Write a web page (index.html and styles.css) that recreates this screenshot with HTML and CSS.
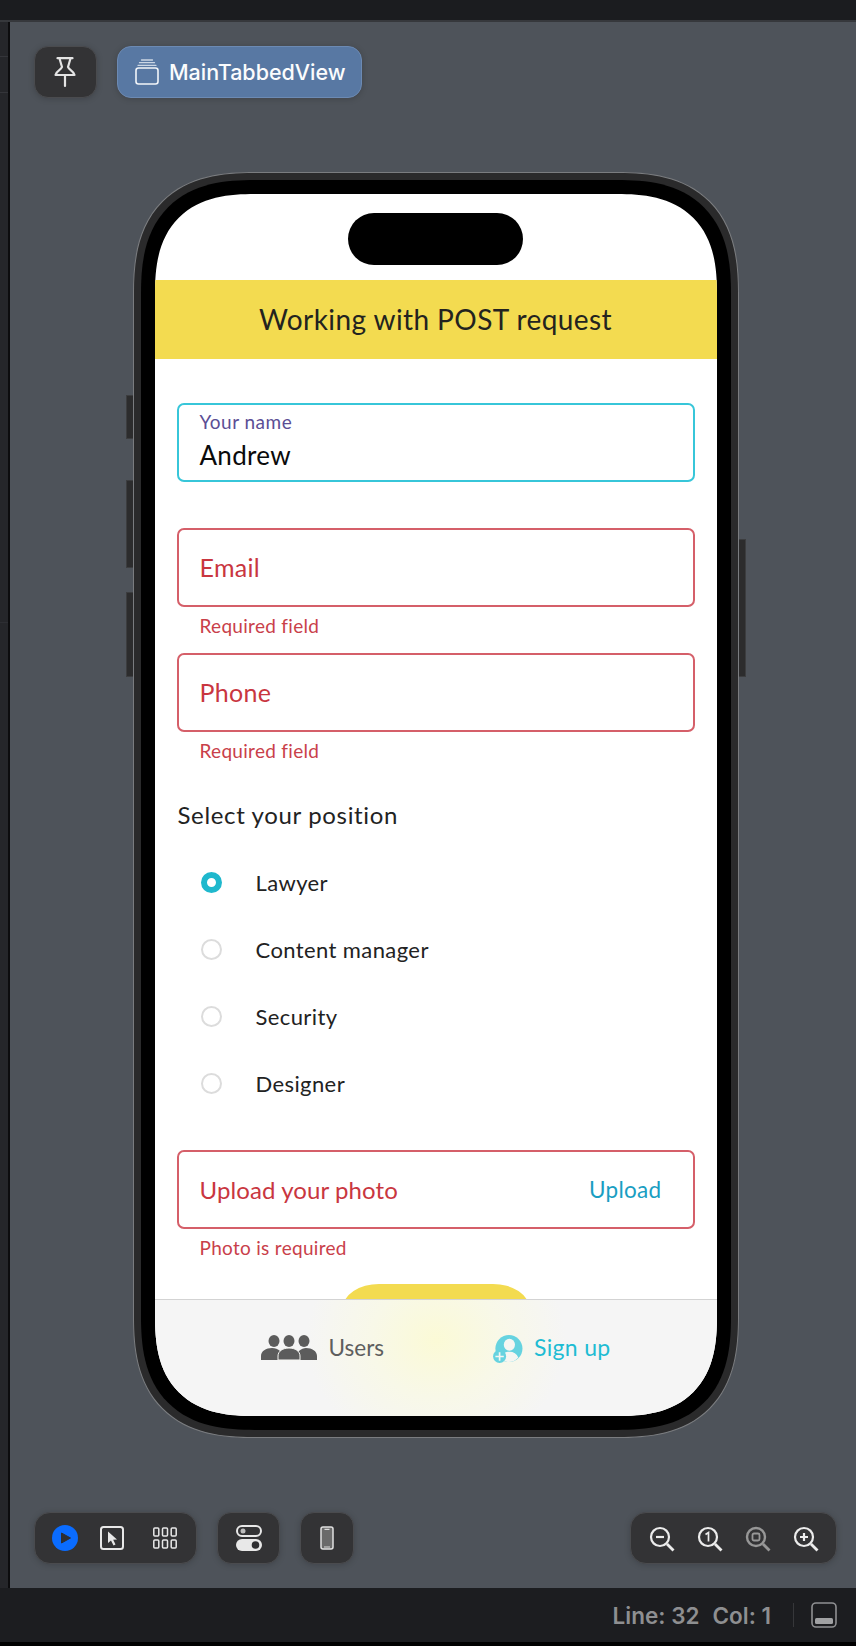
FILE: index.html
```html
<!DOCTYPE html>
<html lang="en">
<head>
<meta charset="utf-8">
<title>MainTabbedView</title>
<link rel="stylesheet" href="styles.css">
</head>
<body>
<div class="app">
  <div class="topbar"></div>
  <div class="workspace">
    <aside class="strip">
      <div class="strip-row one"></div>
      <div class="strip-row two"></div>
      <div class="strip-row three"></div>
    </aside>
    <main class="canvas">
      <div class="toolbar">
        <button class="tool pin">
          <svg width="22" height="32" viewBox="0 0 22 32" fill="none" stroke="#e4e4e4" stroke-width="2.200" stroke-linecap="round" stroke-linejoin="round"><path d="M3.500 2.200h15M5.500 2.500 8 11c-1 3-5.500 3.500-6.500 8h19c-1-4.500-5.500-5-6.500-8l2.500-8.500M11 19v11"/></svg>
        </button>
        <button class="tool preview-name">
          <svg width="24" height="26" viewBox="0 0 24 26" fill="none" stroke="#f2f5f9" stroke-width="1.600" stroke-linecap="round"><path d="M6.500 1h11M4.500 3.700h15M3 6.300h18" stroke-width="1.300" opacity=".75"/><rect x="1" y="9" width="22" height="16" rx="2.500"/></svg>
          <span>MainTabbedView</span>
        </button>
      </div>

      <div class="phone">
        <span class="side-btn mute"></span>
        <span class="side-btn vol-up"></span>
        <span class="side-btn vol-down"></span>
        <span class="side-btn power"></span>
        <div class="bezel">
          <div class="screen">
            <div class="island"></div>
            <div class="safe"></div>
            <header class="app-header">Working with POST request</header>
            <form class="form">
              <div class="field active">
                <span class="float-label">Your name</span>
                <span class="value">Andrew</span>
              </div>
              <div class="field error"><span class="placeholder">Email</span></div>
              <div class="hint">Required field</div>
              <div class="field error"><span class="placeholder">Phone</span></div>
              <div class="hint">Required field</div>
              <div class="section-title">Select your position</div>
              <div class="radios">
                <div class="radio-row"><span class="radio on"></span><span>Lawyer</span></div>
                <div class="radio-row"><span class="radio"></span><span>Content manager</span></div>
                <div class="radio-row"><span class="radio"></span><span>Security</span></div>
                <div class="radio-row"><span class="radio"></span><span>Designer</span></div>
              </div>
              <div class="field error upload"><span class="placeholder photo">Upload your photo</span><span class="upload-link">Upload</span></div>
              <div class="hint">Photo is required</div>
              <div class="submit"></div>
            </form>
            <nav class="tabbar">
              <div class="tab users">
                <svg width="56" height="26" viewBox="0 0 56 26" fill="#5c5c5c"><ellipse cx="13" cy="6" rx="5.500" ry="6"/><ellipse cx="28" cy="6" rx="5.500" ry="6"/><ellipse cx="43" cy="6" rx="5.500" ry="6"/><path d="M0 25v-4c0-5 5-8 11-8 3 0 6 1 8 3l-1 9zM38 16c2-2 5-3 7-3 6 0 11 3 11 8v4H38z"/><path d="M17 25v-4c0-5 5-8 11-8s11 3 11 8v4z" stroke="#f5f5f2" stroke-width="1"/></svg>
                <span>Users</span>
              </div>
              <div class="tab signup">
                <svg width="32" height="28" viewBox="0 0 32 30"><circle cx="17" cy="14.500" r="14.500" fill="#66d3e0"/><ellipse cx="17.500" cy="10.500" rx="6" ry="6.500" fill="#f5f6f2"/><path d="M9 25c1-5 4-7 8.500-7s8 2 9.500 6c-3 3-6 5-10 5s-5-1-8-4z" fill="#f5f6f2"/><circle cx="7" cy="23" r="7" fill="#66d3e0"/><path d="M7 18.500v9M2.500 23h9" stroke="#f5f6f2" stroke-width="1.800"/></svg>
                <span>Sign up</span>
              </div>
            </nav>
          </div>
        </div>
      </div>

      <div class="toolbar bottom">
        <div class="tool group modes">
          <svg width="26" height="26" viewBox="0 0 26 26"><circle cx="13" cy="13" r="13" fill="#0a6cff"/><path d="M9.500 8v10l9-5z" fill="#2e2e30" stroke="#2e2e30" stroke-width="1" stroke-linejoin="round"/></svg>
          <svg width="24" height="24" viewBox="0 0 24 24" fill="none"><rect x="1" y="1" width="22" height="22" rx="2.500" stroke="#e8e8e8" stroke-width="2"/><path d="M8 5.500v11.500l3-2.500 2.500 5 2-1-2.300-4.800 3.800-.2z" fill="#e8e8e8"/></svg>
          <svg width="24" height="22" viewBox="0 0 24 22" fill="none" stroke="#e8e8e8" stroke-width="1.500"><rect x=".8" y="1" width="5" height="8" rx="1"/><rect x="9.500" y="1" width="5" height="8" rx="1"/><rect x="18.200" y="1" width="5" height="8" rx="1"/><rect x=".8" y="13" width="5" height="8" rx="1"/><rect x="9.500" y="13" width="5" height="8" rx="1"/><rect x="18.200" y="13" width="5" height="8" rx="1"/></svg>
        </div>
        <div class="tool settings">
          <svg width="26" height="26" viewBox="0 0 26 26"><rect x="1" y="1" width="24" height="10" rx="5" fill="none" stroke="#e8e8e8" stroke-width="2"/><circle cx="7" cy="6" r="2.500" fill="#bdbdbd"/><rect y="14" width="26" height="12" rx="6" fill="#e8e8e8"/><circle cx="19.500" cy="20" r="3.800" fill="#2e2e30"/></svg>
        </div>
        <div class="tool device">
          <svg width="14" height="24" viewBox="0 0 14 24"><rect x="1" y="1" width="12" height="22" rx="2" fill="#6a6a6a" stroke="#e0e0e0" stroke-width="1.500"/><path d="M4.500 3.300h5M4 21h6" stroke="#d8d8d8" stroke-width="1.200"/></svg>
        </div>
        <div class="tool group zooms">
          <svg class="zoom-icon" width="26" height="26" viewBox="0 0 26 26" fill="none" stroke="#ececec"><circle cx="11" cy="11" r="9" stroke-width="2.200"/><path d="M18 18l6.500 6.500" stroke-width="2.800"/><path d="M7 11h8" stroke-width="2.200"/></svg>
          <svg class="zoom-icon" width="26" height="26" viewBox="0 0 26 26" fill="none" stroke="#ececec"><circle cx="11" cy="11" r="9" stroke-width="2.200"/><path d="M18 18l6.500 6.500" stroke-width="2.800"/><path d="M8.500 8.500l3-2v9" stroke-width="1.700"/></svg>
          <svg class="zoom-icon" width="26" height="26" viewBox="0 0 26 26" fill="none" stroke="#979797"><circle cx="11" cy="11" r="9" stroke-width="2.400"/><path d="M18 18l6.500 6.500" stroke-width="2.800"/><rect x="7.500" y="7.500" width="7" height="7" rx="1.500" stroke-width="1.800"/></svg>
          <svg class="zoom-icon" width="26" height="26" viewBox="0 0 26 26" fill="none" stroke="#ececec"><circle cx="11" cy="11" r="9" stroke-width="2.200"/><path d="M18 18l6.500 6.500" stroke-width="2.800"/><path d="M7 11h8M11 7v8" stroke-width="2.200"/></svg>
        </div>
      </div>
    </main>
  </div>
  <footer class="statusbar">
    <span class="pos">Line: 32</span>
    <span class="pos col">Col: 1</span>
    <span class="divider"></span>
    <svg width="26" height="26" viewBox="0 0 26 26"><rect x="1" y="1" width="24" height="24" rx="4" fill="none" stroke="#8f9092" stroke-width="1.600"/><rect x="4" y="16" width="18" height="6" rx="1.500" fill="#a0a1a3"/></svg>
  </footer>
</div>
</body>
</html>
```

FILE: styles.css
```css
* { box-sizing: border-box; }
html, body { margin: 0; padding: 0; }
body { width: 856px; height: 1646px; overflow: hidden; background: #000; font-family: "Lato", "Noto Sans", sans-serif; }
.app { display: flex; flex-direction: column; height: 1646px; }
.topbar { height: 22px; background: #1b1c1f; border-bottom: 2px solid #36383c; flex: none; }
.workspace { display: flex; height: 1566px; flex: none; }
.strip { width: 10px; flex: none; background: #25262a; border-right: 2px solid #0c0c0e; }
.strip-row { width: 8px; }
.strip-row.one { height: 35px; border-bottom: 1px solid #34353a; }
.strip-row.two { height: 36px; border-bottom: 1px solid #34353a; }
.strip-row.three { height: 530px; border-bottom: 1px solid #2d2e33; }
.canvas { flex: 1; background: #4e535a; padding: 24px 19px 25px 24px; display: flex; flex-direction: column; }

.toolbar { display: flex; gap: 20px; height: 52px; flex: none; }
.toolbar.bottom { margin-top: 74px; }
.tool { height: 52px; background: #333335; border: 1px solid #4a4b4e; border-radius: 14px; display: flex; align-items: center; justify-content: center; padding: 0; box-shadow: 0 1px 6px rgba(0,0,0,.18); font: inherit; }
.pin { width: 63px; padding-right: 2px; }
.preview-name { width: 245px; background: #5878a3; border-color: #6c8ab3; gap: 10px; justify-content: flex-start; padding-left: 17px; color: #fbfcfd; font-family: "Inter", sans-serif; font-size: 21.500px; font-weight: 500; }
.group { border-radius: 16px; }
.modes { width: 163px; justify-content: flex-start; padding-left: 17px; gap: 22px; }
.modes svg:nth-child(3) { margin-left: 7px; }
.settings { width: 63px; }
.device { width: 54px; }
.zooms { width: 207px; margin-left: auto; gap: 22px; padding-top: 1px; }

.phone { position: relative; align-self: center; margin-top: 74px; flex: none; width: 606px; height: 1266px; padding: 7px; background: #2a2a2b; border: 1px solid #7a7c7f; border-radius: 122px; corner-shape: superellipse(1.35); }
.side-btn { position: absolute; width: 7px; background: #2c2c2d; border: 1px solid #3c3d3f; border-right: 0; left: -8px; }
.mute { top: 222px; height: 44px; }
.vol-up { top: 307px; height: 88px; }
.vol-down { top: 419px; height: 85px; }
.power { left: auto; right: -8px; top: 366px; height: 138px; border-right: 1px solid #3c3d3f; border-left: 0; }
.bezel { height: 100%; padding: 14px; background: #000; border-radius: 114px; corner-shape: superellipse(1.35); }
.screen { position: relative; height: 100%; background: #fff; border-radius: 100px; corner-shape: superellipse(1.35); overflow: hidden; display: flex; flex-direction: column; }
.island { position: absolute; top: 19px; left: 193px; width: 175px; height: 52px; background: #000; border-radius: 26px; }
.safe { height: 86px; flex: none; }
.app-header { height: 79px; flex: none; background: #f3db50; color: #23231f; display: flex; align-items: center; justify-content: center; font-size: 28px; letter-spacing: .42px; padding-bottom: 2px; }
.form { padding: 44px 22px 0; flex: 1; display: flex; flex-direction: column; }
.field { height: 79px; flex: none; border: 2px solid #d55f69; border-radius: 7px; padding: 0 21px 2px; display: flex; align-items: center; }
.field.active { border-color: #37c6d9; flex-direction: column; align-items: flex-start; justify-content: flex-start; margin-bottom: 46px; padding-top: 5px; padding-bottom: 0; }
.float-label { color: #5b4e95; font-size: 19px; line-height: 24px; letter-spacing: .5px; }
.value { color: #0b0b0b; font-size: 26px; line-height: 34px; letter-spacing: .3px; margin-top: 4px; }
.placeholder { color: #c9363f; font-size: 25px; letter-spacing: .3px; }
.placeholder.photo { font-size: 24px; letter-spacing: .1px; }
.hint { height: 46px; flex: none; padding: 7px 0 0 23px; color: #c9404a; font-size: 19px; line-height: 24px; letter-spacing: .3px; }
.section-title { margin-top: 20px; padding-left: 1px; color: #222; font-size: 24px; line-height: 34px; letter-spacing: .65px; flex: none; }
.radios { margin-top: 17px; display: flex; flex-direction: column; flex: none; }
.radio-row { height: 67px; display: flex; align-items: center; gap: 34px; padding-left: 24px; color: #222; font-size: 22px; letter-spacing: .4px; }
.radio { width: 21px; height: 21px; border-radius: 50%; border: 2px solid #dcdcdc; flex: none; }
.radio.on { border: 6.500px solid #1fb8cd; background: #fff; }
.upload { margin-top: 33px; justify-content: space-between; padding-right: 31px; padding-bottom: 0; }
.upload-link { color: #1a9ec2; font-size: 22.500px; letter-spacing: .3px; }
.submit { width: 186px; height: 60px; flex: none; background: #f3db50; border-radius: 36px 36px 0 0 / 24px 24px 0 0; align-self: center; margin-top: 9px; }
.tabbar { position: absolute; left: 0; right: 0; bottom: 0; height: 117px; border-top: 1px solid #d3d3d3; padding: 35px 106px 0 106px; display: flex; justify-content: space-between; background: radial-gradient(ellipse 130px 115px at 50% 35%, #fbfad6 0%, #f8f8e8 50%, #f5f5f5 100%); }
.tab { display: flex; align-items: flex-start; font-size: 23px; letter-spacing: .3px; }
.users { gap: 12px; color: #5e5e5e; font-size: 22.500px; letter-spacing: 0; }
.signup { gap: 10px; color: #1ebcd3; }
.signup svg { margin-left: 2px; }
.tab span { line-height: 30px; margin-top: -2px; }
.signup span { margin-top: -3px; }

.statusbar { height: 56px; flex: none; background: #1c1d20; border-bottom: 2px solid #000; padding-right: 19px; display: flex; align-items: center; justify-content: flex-end; color: #8e8f91; font-family: "Inter", "Liberation Sans", sans-serif; font-size: 22.500px; font-weight: 600; }
.col { margin-left: 13px; }
.divider { width: 1px; height: 24px; background: #36373a; margin: 0 17px 0 22px; }
```
